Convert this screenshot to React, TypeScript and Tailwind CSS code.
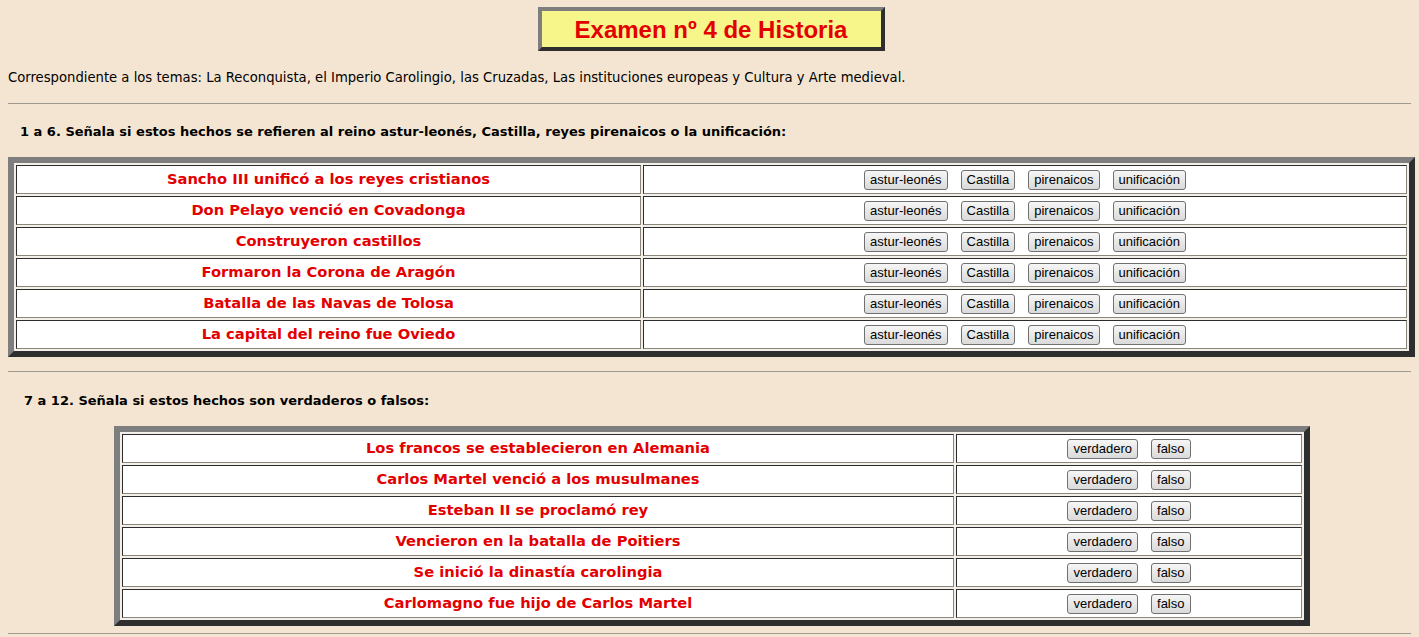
const tahoma = { fontFamily: '"DejaVu Sans", Verdana, sans-serif' }

const part1 = [
  'Sancho III unificó a los reyes cristianos',
  'Don Pelayo venció en Covadonga',
  'Construyeron castillos',
  'Formaron la Corona de Aragón',
  'Batalla de las Navas de Tolosa',
  'La capital del reino fue Oviedo',
]

const part2 = [
  'Los francos se establecieron en Alemania',
  'Carlos Martel venció a los musulmanes',
  'Esteban II se proclamó rey',
  'Vencieron en la batalla de Poitiers',
  'Se inició la dinastía carolingia',
  'Carlomagno fue hijo de Carlos Martel',
]

function Btn({ label }: { label: string }) {
  return (
    <button className="h-[20px] px-[5px] rounded-[3px] border border-[#707070] bg-gradient-to-b from-[#f6f6f6] to-[#dadada] text-[13px] leading-none text-black font-['Liberation_Sans',Arial,sans-serif]">
      {label}
    </button>
  )
}

function Quiz({ items, options, widthClass, firstCol }: { items: string[]; options: string[]; widthClass: string; firstCol: string }) {
  return (
    <table
      className={`${widthClass} border-separate border-spacing-[2px] border-[6px] border-t-[#7e7e7e] border-l-[#7e7e7e] border-r-[#2e2e2e] border-b-[#2e2e2e] bg-[#f3efe9]`}
    >
      <tbody>
        {items.map((text) => (
          <tr key={text} className="h-[29px]">
            <td
              className={`${firstCol} p-0 bg-white border border-t-[#2c2c2c] border-l-[#2c2c2c] border-r-[#8c857c] border-b-[#8c857c] text-center text-[#e30000] font-bold text-[14.7px]`}
              style={tahoma}
            >
              {text}
            </td>
            <td className="p-0 bg-white border border-t-[#2c2c2c] border-l-[#2c2c2c] border-r-[#8c857c] border-b-[#8c857c]">
              <div className="flex justify-center gap-[13px]">
                {options.map((o) => (
                  <Btn key={o} label={o} />
                ))}
              </div>
            </td>
          </tr>
        ))}
      </tbody>
    </table>
  )
}

export default function App() {
  return (
    <div className="min-h-[637px] w-[1419px] bg-[#f4e5d2] px-[8px] pt-[7px] overflow-hidden">
      {/* Title */}
      <div className="flex justify-center pl-[3px]">
        <div className="w-[347px] h-[44px] border-[4px] border-t-[#7e7e7e] border-l-[#7e7e7e] border-r-[#2e2e2e] border-b-[#2e2e2e] bg-[#f6f68a] flex items-center justify-center">
          <span className="text-[#e30000] font-bold text-[24px] font-['Liberation_Sans',Arial,sans-serif] pt-[1px]">
            Examen nº 4 de Historia
          </span>
        </div>
      </div>

      <p className="mt-[18px] text-[13.2px] leading-[18px] text-black" style={tahoma}>
        Correspondiente a los temas: La Reconquista, el Imperio Carolingio, las Cruzadas, Las instituciones europeas y Cultura y Arte medieval.
      </p>

      <hr className="mt-[16px] border-t border-[#a09a92] border-b-0 w-[1403px]" />

      <p className="mt-[19px] pl-[12px] text-[13px] leading-[18px] font-bold text-black" style={tahoma}>
        1 a 6. Señala si estos hechos se refieren al reino astur-leonés, Castilla, reyes pirenaicos o la unificación:
      </p>

      <div className="mt-[16px]">
        <Quiz items={part1} options={['astur-leonés', 'Castilla', 'pirenaicos', 'unificación']} widthClass="w-[1407px]" firstCol="w-[625px]" />
      </div>

      <hr className="mt-[14px] border-t border-[#a09a92] border-b-0 w-[1403px]" />

      <p className="mt-[20px] pl-[16px] text-[13px] leading-[18px] font-bold text-black" style={tahoma}>
        7 a 12. Señala si estos hechos son verdaderos o falsos:
      </p>

      <div className="mt-[16px] flex justify-center pl-[5px]">
        <Quiz items={part2} options={['verdadero', 'falso']} widthClass="w-[1196px]" firstCol="w-[832px]" />
      </div>

      <hr className="mt-[7px] border-t border-[#a09a92] border-b-0 w-[1403px]" />
    </div>
  )
}
